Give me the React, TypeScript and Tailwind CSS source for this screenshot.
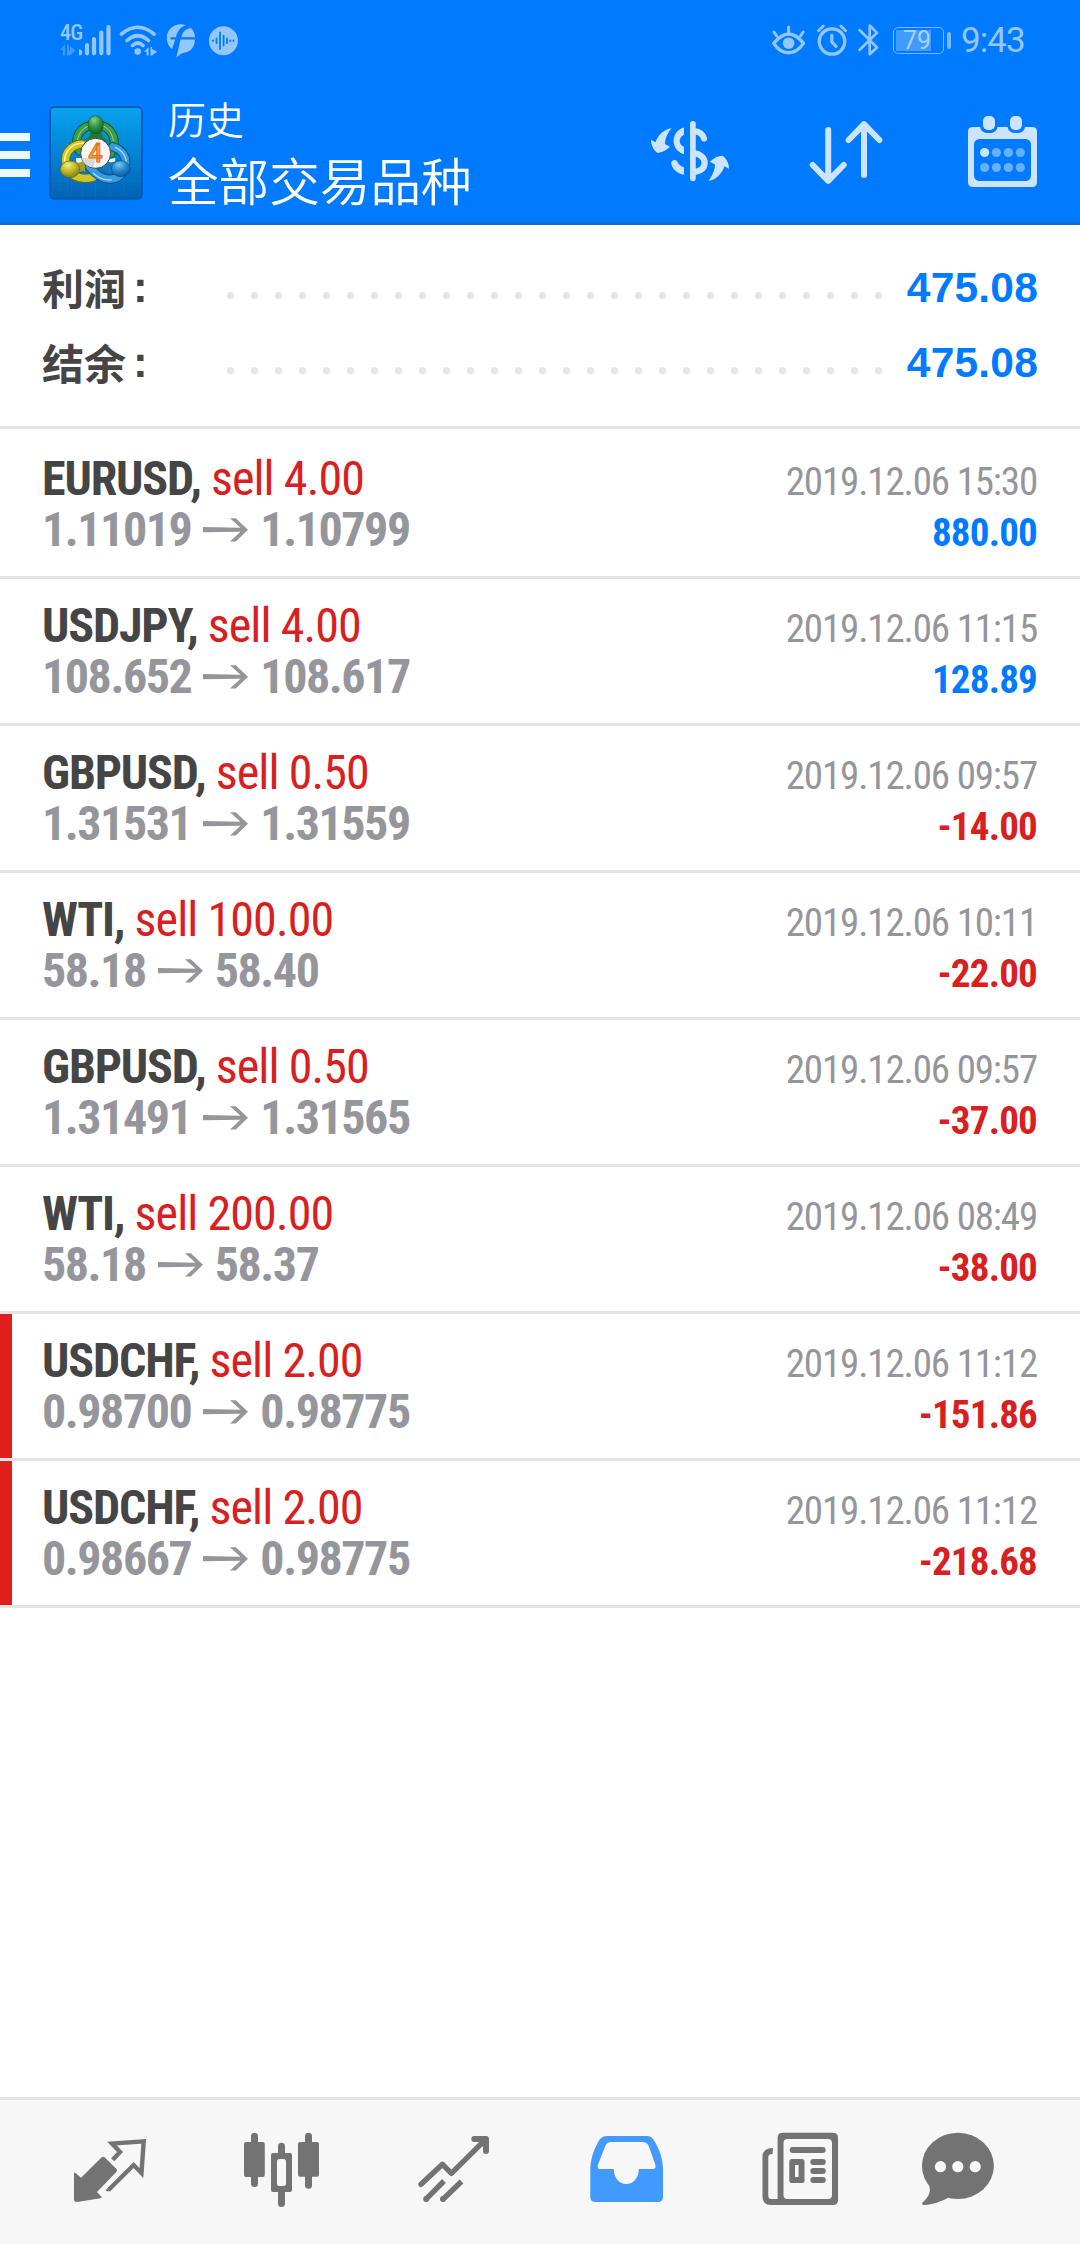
import React from 'react';

interface Deal {
  symbol: string;
  volume: string;
  open: string;
  close: string;
  time: string;
  profit: string;
  marked?: boolean;
}

const deals: Deal[] = [
  { symbol: 'EURUSD', volume: '4.00', open: '1.11019', close: '1.10799', time: '2019.12.06 15:30', profit: '880.00' },
  { symbol: 'USDJPY', volume: '4.00', open: '108.652', close: '108.617', time: '2019.12.06 11:15', profit: '128.89' },
  { symbol: 'GBPUSD', volume: '0.50', open: '1.31531', close: '1.31559', time: '2019.12.06 09:57', profit: '-14.00' },
  { symbol: 'WTI', volume: '100.00', open: '58.18', close: '58.40', time: '2019.12.06 10:11', profit: '-22.00' },
  { symbol: 'GBPUSD', volume: '0.50', open: '1.31491', close: '1.31565', time: '2019.12.06 09:57', profit: '-37.00' },
  { symbol: 'WTI', volume: '200.00', open: '58.18', close: '58.37', time: '2019.12.06 08:49', profit: '-38.00' },
  { symbol: 'USDCHF', volume: '2.00', open: '0.98700', close: '0.98775', time: '2019.12.06 11:12', profit: '-151.86', marked: true },
  { symbol: 'USDCHF', volume: '2.00', open: '0.98667', close: '0.98775', time: '2019.12.06 11:12', profit: '-218.68', marked: true },
];

const DOTS = Array.from({ length: 28 }, (_, i) => i);

const StatusLeft = () => (
  <div className="flex items-start">
    <div className="w-[19px] pt-[22px]">
      <div className="text-[22px] leading-[21px] font-medium tracking-[-0.8px] [font-stretch:75%] text-[#94c6ff]">4G</div>
      <svg className="w-4 h-3 mt-px" viewBox="60 44 16 12" fill="#3d9bff">
        <path d="M60 50 L65 44.5 V55.5 H62.8 V50Z M67 44.5 H69 V50.5 H70 V46 L75.5 50.5 L70 55.5 H67Z" />
      </svg>
    </div>
    <svg className="w-[162px] h-[40px] mt-5" viewBox="78 20 162 40" fill="none" stroke="#94c6ff" strokeLinecap="round">
      <path d="M79 51.5 V53.3 M86 45 V53.3 M93 39 V53.3 M100.3 32.5 V53.3 M107.5 27 V53.3" strokeWidth="4.2" />
      <path d="M120.5 34 Q136.7 20.5 153 34 M126 40.5 Q136.7 31 147.5 40.5 M131.5 45.5 Q136.7 40.5 142 45.5" strokeWidth="3.6" />
      <circle cx="136.7" cy="51.6" r="3.3" fill="#94c6ff" stroke="none" />
      <path d="M143 51.8 L147.6 47 V55.5 H145.6 V51.8Z M149.5 47 H151 V49 L156 51.8 L151 55.5 H149.5Z" fill="#94c6ff" stroke="none" />
      <g fill="#94c6ff" stroke="none">
        <path d="M171 49 C165 45 164 34 169 29 C173 24.5 179 23 185 25 C179 27 176 32 175 37.2 H169.5 V39.4 H174.3 C173.2 43 172 46 171 49Z" />
        <path d="M186.5 25.5 C191.5 28 194 33 194 37.2 H180.3 C181.5 32 185 28.5 190 28.3 C189.5 27.5 188 26.5 186.5 25.5Z" />
        <path d="M179.5 39.6 H194 C194 48 188 53 181 53.2 L175.3 57.5Z" />
      </g>
      <circle cx="222.4" cy="40.7" r="14.5" fill="#94c6ff" stroke="none" />
      <path d="M212 40.3 V41 M215.5 38.5 V43 M219 32.5 V49 M222.6 36 V45.5 M226 38.5 V43 M229.3 40.3 V41 M232.5 40.3 V41" stroke="#007aff" strokeWidth="1.8" />
    </svg>
  </div>
);

const StatusRight = () => (
  <div className="flex items-start text-[#94c6ff]">
    <svg className="w-[112px] h-[40px] mt-5" viewBox="770 20 112 40" fill="none" stroke="currentColor" strokeLinecap="round" strokeLinejoin="round">
      <path d="M773.7 43.4 C779 37 784 34 788.6 34 C793 34 798.5 37 803.5 43.4 C799 50 794 52.7 788.6 52.7 C783 52.7 778 50 773.7 43.4Z" strokeWidth="3.4" />
      <circle cx="788.6" cy="43.2" r="5.8" fill="currentColor" stroke="none" />
      <path d="M788.6 27 V33 M774 32 L776.7 36 M803.2 32 L800.5 36" strokeWidth="3" />
      <circle cx="832" cy="41.5" r="12.7" strokeWidth="3.3" />
      <path d="M831.8 35.3 V41.8 L836 46.3" strokeWidth="3.2" />
      <path d="M818.5 30.8 L823.3 26 M840.8 26 L845.6 30.8" strokeWidth="2.8" />
      <path d="M859.5 30 L877 47.5 L869.7 54.3 V25.5 L877 32.8 L859.5 50" strokeWidth="2.6" />
    </svg>
    <div className="flex items-center mt-[27px] ml-[11px]">
      <div className="w-[51px] h-[27px] rounded-[5px] border-[1.5px] border-[#7ab8ff] p-[2px]">
        <div className="flex justify-end items-center w-[35px] h-full bg-[#409bff] text-[25px] leading-5 text-[#a8d2ff]">79</div>
      </div>
      <div className="w-[4px] h-[17px] ml-[3px] rounded bg-[#7ab8ff]" />
    </div>
    <div className="w-[65px] ml-[10px] mt-[21px] text-[35px] leading-10 tracking-[-0.9px] whitespace-nowrap">9:43</div>
  </div>
);

const AppLogo = () => (
  <svg className="w-[92px] h-[92px] overflow-visible" viewBox="30 37 276 276">
    <defs>
      <linearGradient id="tile" x1="0" y1="0" x2="0" y2="1">
        <stop offset="0" stopColor="#08a2ee" />
        <stop offset="0.5" stopColor="#0383d6" />
        <stop offset="1" stopColor="#0262b4" />
      </linearGradient>
      <radialGradient id="green" cx="0.4" cy="0.25" r="0.8">
        <stop offset="0" stopColor="#8fd08a" />
        <stop offset="0.5" stopColor="#2f9440" />
        <stop offset="1" stopColor="#0e5f2a" />
      </radialGradient>
      <radialGradient id="yellow" cx="0.4" cy="0.25" r="0.8">
        <stop offset="0" stopColor="#f4ee7c" />
        <stop offset="0.5" stopColor="#bdb727" />
        <stop offset="1" stopColor="#74761a" />
      </radialGradient>
      <radialGradient id="blue" cx="0.4" cy="0.25" r="0.8">
        <stop offset="0" stopColor="#7cc8f0" />
        <stop offset="0.5" stopColor="#2488cc" />
        <stop offset="1" stopColor="#0a549c" />
      </radialGradient>
    </defs>
    <rect x="29" y="36" width="278" height="278" rx="14" fill="none" stroke="#0566cf" strokeWidth="4" />
    <rect x="31" y="38" width="274" height="274" rx="12" fill="url(#tile)" stroke="#0557ad" strokeWidth="4" />
    <path d="M82 42 V308 M126 42 V308 M167 42 V308 M210 42 V308 M253 42 V308 M34 84 H302 M34 128 H302 M34 172 H302 M34 216 H302 M34 260 H302" stroke="#35b4f5" strokeOpacity="0.18" strokeWidth="2" />
    <g fill="none" strokeLinecap="round">
      <path d="M118 168 C98 128 122 91 167 91 C212 91 238 132 212 176" stroke="#14592b" strokeWidth="28" />
      <path d="M118 168 C98 128 122 91 167 91 C212 91 238 132 212 176" stroke="#3d9c46" strokeWidth="22" />
      <path d="M112 140 C114 108 140 90 167 90 C196 90 216 108 220 138" stroke="#9bd596" strokeWidth="3" />
      <path d="M138 150 C102 142 70 172 78 206 C86 242 116 258 158 248" stroke="#6c6b16" strokeWidth="28" />
      <path d="M138 150 C102 142 70 172 78 206 C86 242 116 258 158 248" stroke="#cfc62e" strokeWidth="22" />
      <path d="M132 146 C98 144 74 168 74 198" stroke="#fbf58c" strokeWidth="5" />
      <path d="M218 156 C252 166 266 196 252 226 C234 262 188 266 148 216" stroke="#0b4f8f" strokeWidth="28" />
      <path d="M218 156 C252 166 266 196 252 226 C234 262 188 266 148 216" stroke="#3a9bdb" strokeWidth="22" />
      <path d="M226 158 C252 170 264 192 256 218 M160 236 C178 252 196 258 214 255" stroke="#9bdcff" strokeWidth="4" />
    </g>
    <path d="M152 118 L182 118 L190 140 H144Z M108 190 L130 190 L134 222 L112 236Z M226 190 L204 194 L198 220 L222 236Z" fill="#eef4f2" />
    <path d="M150 110 C152 124 144 132 130 138 L150 146 H186 L206 138 C190 132 184 124 186 110Z" fill="#1f7c38" />
    <ellipse cx="167" cy="90" rx="23" ry="27" fill="url(#green)" stroke="#125527" strokeWidth="2" />
    <path d="M100 200 C112 206 122 206 132 196 L136 232 C126 226 116 230 108 240Z" fill="#a39d22" />
    <ellipse cx="90" cy="224" rx="29" ry="25" fill="url(#yellow)" stroke="#65650f" strokeWidth="2" />
    <path d="M228 198 C216 206 208 204 198 196 L196 228 C208 226 216 232 224 240Z" fill="#1d77bb" />
    <ellipse cx="242" cy="222" rx="28" ry="24" fill="url(#blue)" stroke="#0c4c8a" strokeWidth="2" />
    <circle cx="167" cy="176" r="45" fill="#f7f7f7" stroke="#3b4a3c" strokeWidth="3" />
    <path d="M124 190 A45 45 0 0 0 160 219 L166 190Z" fill="#d9d9d9" />
    <text x="166" y="202" textAnchor="middle" fontSize="76" fontWeight="500" fill="#fba043" stroke="#d9741a" strokeWidth="3" fontFamily="Roboto, sans-serif">4</text>
  </svg>
);

const CurrencyIcon = () => (
  <svg className="w-20 h-[68px]" viewBox="650 120 80 68" fill="none" stroke="#cce4ff">
    <path d="M651 139.7 L655.5 142.2 C658 135 664 129 671.5 128.2 C667.5 133 665 139 665 144 L670 146.7 C667 150 662 152.5 657.5 153 C653.5 150 651 145 651 139.7Z" fill="#cce4ff" stroke="none" />
    <path d="M729 168.8 L724.5 166.3 C722 173.5 716 180 708.5 181 C712.5 175.5 715 169.5 715 164.5 L710 161.8 C713 158.5 718 156 722.5 155.8 C726.5 158.5 729 163.5 729 168.8Z" fill="#cce4ff" stroke="none" />
    <path d="M692.9 123.8 V178.3" strokeWidth="5.7" strokeLinecap="round" />
    <path d="M684 127.5 C677.5 129 673.6 135 673.6 141 C673.6 147.5 678 152.5 684 154.2 V146.8 C681 145.5 679.7 143.5 679.7 141 C679.7 138.5 681 136.5 684 134.8Z" fill="#cce4ff" stroke="none" />
    <path d="M684 167.3 C681.3 166.3 678.5 164.5 677.3 161.5 C676 159 671.5 159.5 671.2 163 C671.8 168.5 677 173.8 684 174.8Z" fill="#cce4ff" stroke="none" />
    <path d="M694 131 C699.5 131.7 703 134.5 704 138.6" strokeWidth="6.2" strokeLinecap="round" />
    <path d="M694 153 C701 154.5 704.6 158 704.6 163 C704.6 168 701 171 694 172" strokeWidth="6.2" />
  </svg>
);

const SortIcon = () => (
  <svg className="w-[76px] h-[68px]" viewBox="808 120 76 68" fill="none" stroke="#cce4ff" strokeWidth="6" strokeLinecap="round" strokeLinejoin="round">
    <path d="M828.2 130 V180 M812.7 165 L828.2 180.8 L843.7 165" />
    <path d="M864 175 V125 M848.6 140 L864 124.2 L879.4 140" />
  </svg>
);

const CalendarIcon = () => (
  <svg className="w-[70px] h-[72px]" viewBox="968 116 70 72">
    <rect x="968" y="127" width="69" height="60" rx="4.5" fill="#cce4ff" />
    <rect x="974" y="139" width="57" height="42" rx="5.5" fill="#007aff" />
    <rect x="980" y="112" width="17.6" height="21" rx="7" fill="#007aff" />
    <rect x="1007.5" y="112" width="17.6" height="21" rx="7" fill="#007aff" />
    <rect x="983" y="116" width="12" height="14" rx="5" fill="#cce4ff" />
    <rect x="1010" y="116" width="12" height="14" rx="5" fill="#cce4ff" />
    {[984.6, 996.4, 1008.4, 1020.3].map((cx, i) => (
      <g key={cx} fill="#66b0ff">
        <circle cx={cx} cy="152.5" r="4.6" fill={i === 0 ? '#cce4ff' : '#66b0ff'} />
        <circle cx={cx} cy="167.5" r="4.6" />
      </g>
    ))}
  </svg>
);

const ArrowIcon = () => (
  <svg className="w-[45px] h-6 mx-3" viewBox="204 517 45 24" fill="#95969b">
    <path d="M204 526 L241.5 526.7 L231 517.3 H236.8 L249 528.7 L236.8 540.5 H231 L241.5 530.8 L204 531.2Z" />
  </svg>
);

const SummaryRow = ({ label, value }: { label: string; value: string }) => (
  <div className="flex items-center h-[75px] px-[42px] font-bold leading-[60px]">
    <div className="flex w-[184.5px] text-[42px] text-[#454545]">
      {label}
      <span className="ml-[7px] text-[44px] font-['Liberation_Sans',sans-serif]">:</span>
    </div>
    <div className="flex gap-[16.5px] pt-[18px]">
      {DOTS.map((i) => (
        <span key={i} className="w-[7.5px] h-[7.5px] rounded-full bg-[#e5e5e5]" />
      ))}
    </div>
    <div className="flex-1 pt-[3px] text-right text-[42.5px] text-[#007aff] tracking-[0.2px] font-['Liberation_Sans',sans-serif]">{value}</div>
  </div>
);

const DealRow = ({ deal }: { deal: Deal }) => (
  <div className="flex h-[147px] border-b-[3px] border-[#e4e4e4] [font-stretch:75%]">
    <div className={deal.marked ? 'w-3 bg-[#e11e1e]' : 'w-3'} />
    <div className="flex flex-1 justify-between pl-[30px] pr-[42px] pt-[21px]">
      <div className="text-[48px] leading-[51px] whitespace-nowrap">
        <div className="text-[#d82020] tracking-[-0.9px]">
          <span className="font-bold text-[#454545] tracking-[-1.15px]">{deal.symbol},</span> sell {deal.volume}
        </div>
        <div className="flex items-center font-bold text-[#95969b] tracking-[-1.45px]">
          {deal.open}
          <ArrowIcon />
          {deal.close}
        </div>
      </div>
      <div className="pt-[4px] pr-px text-[39px] leading-[51px] text-right whitespace-nowrap">
        <div className="text-[#95969b] tracking-[-1.15px]">{deal.time}</div>
        <div className={deal.profit.startsWith('-') ? 'font-bold text-[#d82020] tracking-[-0.8px]' : 'font-bold text-[#007aff] tracking-[-0.8px]'}>{deal.profit}</div>
      </div>
    </div>
  </div>
);

const TradeIcon = () => (
  <svg className="w-[100px] h-20" viewBox="60 2130 100 80">
    <path d="M74 2173 Q74 2172 75.5 2173 L81 2177.7 L101.5 2157.5 Q103 2156 104.8 2157.5 L116.5 2169 Q117.5 2170.3 116.5 2171.7 L97 2192 L101.6 2197 Q101.5 2198.2 100.5 2198.3 L77 2202 Q74 2202 74 2199.5Z" fill="#737373" />
    <path d="M112.7 2159.8 L120 2152 L112 2143.6 L143.7 2141.3 L141.5 2173 L133.6 2165 L108.5 2190" fill="none" stroke="#737373" strokeWidth="4.4" strokeLinejoin="miter" />
    <path d="M105.5 2189.3 H111.5 L109.5 2191.2 H106.5Z" fill="#737373" />
  </svg>
);

const ChartIcon = () => (
  <svg className="w-[100px] h-20" viewBox="232 2130 100 80" fill="#737373">
    <rect x="251" y="2132.7" width="7" height="54.3" rx="3.5" />
    <rect x="244" y="2142" width="20.8" height="35" rx="2" />
    <rect x="278" y="2142.7" width="7" height="64.3" rx="3.5" />
    <rect x="271" y="2153" width="21" height="39" rx="2" />
    <rect x="277" y="2159" width="9" height="27" rx="2.5" fill="#f7f7f7" />
    <rect x="305" y="2132.7" width="7" height="56" rx="3.5" />
    <rect x="298" y="2142" width="21" height="34.7" rx="2" />
  </svg>
);

const TrendIcon = () => (
  <svg className="w-[100px] h-20" viewBox="404 2130 100 80" fill="none" stroke="#737373" strokeWidth="5.4">
    <path d="M421 2184.3 L442.5 2164.3 L451.4 2173.3 L485 2140" strokeLinecap="round" strokeLinejoin="round" />
    <path d="M474.3 2139 H486 V2151" strokeWidth="6" strokeLinecap="round" strokeLinejoin="round" />
    <path d="M426.8 2198.3 L444 2181 M443.8 2198.5 L461.5 2181.5" />
    <path d="M426.2 2199 h0.01 M443 2199 h0.01" strokeLinecap="round" strokeWidth="6" />
  </svg>
);

const InboxIcon = () => (
  <svg className="w-[100px] h-20" viewBox="576 2130 100 80">
    <path
      fillRule="evenodd"
      fill="#429aff"
      d="M607 2136 H647 Q651 2136 653 2139 C660 2149 663 2160 663 2170 V2197 Q663 2202 658 2202 H595.3 Q590.3 2202 590.3 2197 V2170 C590.3 2160 593.5 2149 600 2139 Q602.5 2136 607 2136Z M611 2142 Q607 2142 605.5 2145.5 L598 2164.5 Q596.8 2169 600 2169 H613.8 C613.8 2178 619.5 2184 626.3 2184 C633 2184 638.8 2178 638.8 2169 H652.5 Q656.5 2169 655.3 2164.5 L648.7 2146 Q647 2142 642 2142Z"
    />
  </svg>
);

const NewsIcon = () => (
  <svg className="w-[100px] h-20" viewBox="750 2130 100 80" fill="#737373">
    <path fillRule="evenodd" d="M782.6 2132.7 H833 Q838 2132.7 838 2137.7 V2200 Q838 2205 833 2205 H771 Q762.5 2205 762.5 2196.5 V2156.5 Q762.5 2148 773 2148 L772.5 2154 Q768.3 2154 768.3 2157 V2196 Q768.3 2199 771.3 2199 H777.6 V2137.7 Q777.6 2132.7 782.6 2132.7Z M787.5 2139 Q783.5 2139 783.5 2143 V2195 Q783.5 2199 787.5 2199 H828 Q832 2199 832 2195 V2143 Q832 2139 828 2139Z" />
    <rect x="789.7" y="2147" width="36" height="6" rx="3" />
    <path fillRule="evenodd" d="M792 2159 H802 Q804.5 2159 804.5 2161.5 V2180.5 Q804.5 2183 802 2183 H792 Q789.3 2183 789.3 2180.5 V2161.5 Q789.3 2159 792 2159Z M795 2165 V2177 H798.6 V2165Z" />
    <rect x="810.3" y="2159" width="15.5" height="6" rx="3" />
    <rect x="810.3" y="2168" width="15.5" height="6" rx="3" />
    <rect x="810.3" y="2177" width="15.5" height="6" rx="3" />
  </svg>
);

const ChatIcon = () => (
  <svg className="w-[100px] h-20" viewBox="920 2130 100 80" fill="#737373">
    <ellipse cx="957.9" cy="2165.8" rx="36" ry="33.1" />
    <path d="M929 2185 C931.5 2192 928 2198 922.5 2202.5 Q921.3 2205 924 2205 C933 2204.5 941 2201.5 948 2197.7 L948 2180Z" />
    <g fill="#f7f7f7">
      <circle cx="940.5" cy="2166.7" r="5.6" />
      <circle cx="957.8" cy="2166.7" r="5.6" />
      <circle cx="975.2" cy="2166.7" r="5.6" />
    </g>
  </svg>
);

const App: React.FC = () => {
  return (
    <div className="flex flex-col w-[1080px] h-[2244px] bg-white overflow-hidden font-['Roboto','Noto_Sans_CJK_SC',sans-serif]">
      <header className="h-[225px] bg-[#007aff] border-b-[3px] border-[#0f6cd0] text-white">
        <div className="flex justify-between h-20 pl-[60px] pr-[54px]">
          <StatusLeft />
          <StatusRight />
        </div>
        <div className="flex">
          <div className="flex flex-col gap-[10px] w-[30px] mt-[53px]">
            <div className="h-2 bg-[#f0f8ff]" />
            <div className="h-2 bg-[#f0f8ff]" />
            <div className="h-2 bg-[#f0f8ff]" />
          </div>
          <div className="ml-5 mt-[27px]">
            <AppLogo />
          </div>
          <div className="flex-1 ml-[26px] mt-3 font-['Noto_Sans_CJK_SC',sans-serif] [font-weight:350]">
            <div className="text-[38px] leading-[52px]">历史</div>
            <div className="text-[50.6px] leading-[70px]">全部交易品种</div>
          </div>
          <div className="flex mt-10 mr-[42px]">
            <CurrencyIcon />
            <div className="ml-[78px]">
              <SortIcon />
            </div>
            <div className="ml-[84px] -mt-1">
              <CalendarIcon />
            </div>
          </div>
        </div>
      </header>

      <section className="h-[204px] pt-6 border-b-[3px] border-[#e4e4e4] font-['Noto_Sans_CJK_SC',sans-serif]">
        <SummaryRow label="利润" value="475.08" />
        <SummaryRow label="结余" value="475.08" />
      </section>

      <main className="flex-1 pt-[3px]">
        {deals.map((deal, i) => (
          <DealRow key={i} deal={deal} />
        ))}
      </main>

      <nav className="flex h-[147px] pl-[60px] pt-[30px] gap-[72px] border-t-[3px] border-[#e4e4e4] bg-[#f7f7f7]">
        <TradeIcon />
        <ChartIcon />
        <TrendIcon />
        <InboxIcon />
        <div className="ml-[2px]">
          <NewsIcon />
        </div>
        <div className="-ml-[2px]">
          <ChatIcon />
        </div>
      </nav>
    </div>
  );
};

export default App;
